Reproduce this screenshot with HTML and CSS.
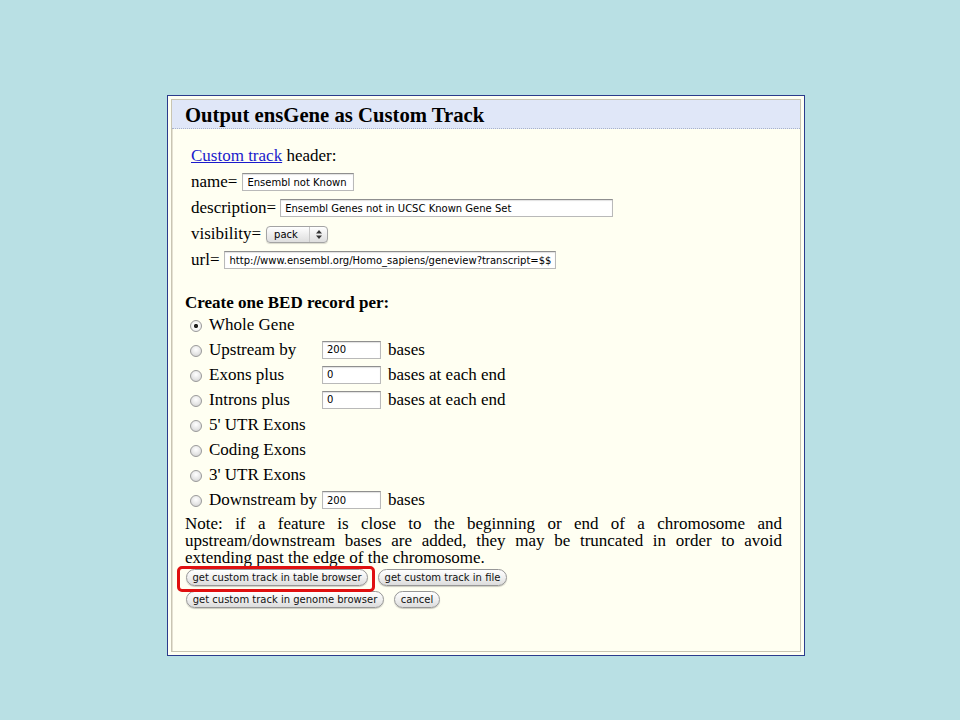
FILE: index.html
```html
<!DOCTYPE html>
<html>
<head>
<meta charset="utf-8">
<link rel="stylesheet" href="styles.css">
</head>
<body>
<div class="panel">
  <div class="inner">
    <div class="head"><h1>Output ensGene as Custom Track</h1></div>
    <div class="track">
      <div class="row"><a href="#" class="link">Custom track</a>&nbsp;header:</div>
      <div class="row">name=<span class="field w-name">Ensembl not Known</span></div>
      <div class="row">description=<span class="field w-desc">Ensembl Genes not in UCSC Known Gene Set</span></div>
      <div class="row">visibility=<span class="select"><span class="sel-text">pack</span><span class="sel-arrows"><svg width="6" height="9" viewBox="0 0 6 9"><path d="M3 0L6 3.5H0Z M3 9L6 5.5H0Z" fill="#333"/></svg></span></span></div>
      <div class="row">url=<span class="field w-url">http://www.ensembl.org/Homo_sapiens/geneview?transcript=$$</span></div>
    </div>
    <div class="bed">
      <div class="bed-title">Create one BED record per:</div>
      <div class="radios">
        <div class="rrow"><span class="radio checked"></span><span class="rlabel">Whole Gene</span></div>
        <div class="rrow"><span class="radio"></span><span class="rlabel fixed">Upstream by</span><span class="field w-num">200</span><span class="after">bases</span></div>
        <div class="rrow"><span class="radio"></span><span class="rlabel fixed">Exons plus</span><span class="field w-num">0</span><span class="after">bases at each end</span></div>
        <div class="rrow"><span class="radio"></span><span class="rlabel fixed">Introns plus</span><span class="field w-num">0</span><span class="after">bases at each end</span></div>
        <div class="rrow"><span class="radio"></span><span class="rlabel">5' UTR Exons</span></div>
        <div class="rrow"><span class="radio"></span><span class="rlabel">Coding Exons</span></div>
        <div class="rrow"><span class="radio"></span><span class="rlabel">3' UTR Exons</span></div>
        <div class="rrow"><span class="radio"></span><span class="rlabel fixed">Downstream by</span><span class="field w-num">200</span><span class="after">bases</span></div>
      </div>
      <p class="note">Note: if a feature is close to the beginning or end of a chromosome and upstream/downstream bases are added, they may be truncated in order to avoid extending past the edge of the chromosome.</p>
      <div class="btnrow">
        <span class="hl"><button class="btn b1">get custom track in table browser</button></span>
        <button class="btn b2">get custom track in file</button>
      </div>
      <div class="btnrow">
        <button class="btn b3">get custom track in genome browser</button>
        <button class="btn b4">cancel</button>
      </div>
    </div>
  </div>
</div>
</body>
</html>
```
FILE: styles.css
```css
html, body {
  margin: 0;
  padding: 0;
}
body {
  width: 960px;
  height: 720px;
  background: #b9e0e4;
  font-family: "Liberation Serif", "Times New Roman", serif;
  font-size: 17px;
  color: #000;
  padding-top: 95px;
  box-sizing: border-box;
  overflow: hidden;
}
.panel {
  margin-left: 167px;
  width: 638px;
  height: 561px;
  box-sizing: border-box;
  border: 1px solid #2b3b8c;
  background: #fffff2;
  padding: 3px;
}
.inner {
  height: 100%;
  box-sizing: border-box;
  border: 1px solid #c9c5b3;
  box-shadow: inset 1px 1px 0 #e4e1d2;
}
.head {
  background: #e0e7f8;
  height: 28px;
  border-bottom: 1px dotted #a8b2cc;
  display: flex;
  align-items: center;
  padding-left: 13px;
}
.head h1 {
  margin: 0;
  font-size: 20.7px;
  font-weight: bold;
  line-height: 1;
  position: relative;
  top: 1px;
}
.track {
  padding: 14px 0 0 19px;
}
.row {
  height: 26px;
  display: flex;
  align-items: center;
  white-space: pre;
}
.link {
  color: #1a1acc;
  text-decoration: underline;
}
.field {
  display: inline-flex;
  align-items: center;
  box-sizing: border-box;
  height: 18px;
  border: 1px solid #b9b9b9;
  border-top-color: #8f8f8f;
  background: #fff;
  box-shadow: inset 0 1px 1px rgba(0,0,0,0.12);
  font-family: "DejaVu Sans", Verdana, sans-serif;
  font-size: 10px;
  padding-left: 4px;
  margin-left: 3px;
  overflow: hidden;
  white-space: nowrap;
}
.w-name { width: 112px; margin-left: 5px; }
.w-desc { width: 333px; margin-left: 4px; }
.w-url { width: 332px; margin-left: 5px; }
.w-num { width: 59px; margin-left: 0; }
.select {
  display: inline-flex;
  align-items: center;
  box-sizing: border-box;
  width: 62px;
  height: 17px;
  margin-left: 5px;
  border: 1px solid #a4a4a4;
  border-radius: 4px;
  background: linear-gradient(#ffffff, #ececec 55%, #dedede);
  font-family: "DejaVu Sans", Verdana, sans-serif;
  font-size: 10px;
  box-shadow: 0 1px 1px rgba(0,0,0,0.15);
}
.sel-text {
  flex: 1;
  padding-left: 7px;
}
.sel-arrows {
  width: 17px;
  height: 100%;
  display: flex;
  align-items: center;
  justify-content: center;
  border-left: 1px solid #c8c8c8;
}
.bed {
  padding: 20px 18px 0 13px;
}
.bed-title {
  font-weight: bold;
  height: 20px;
  line-height: 20px;
}
.radios {
  margin-left: 5px;
  margin-top: -1px;
}
.rrow {
  height: 25.1px;
  display: flex;
  align-items: center;
}
.radio {
  width: 12px;
  height: 12px;
  box-sizing: border-box;
  border-radius: 50%;
  border: 1px solid #9a9a9a;
  background: radial-gradient(circle at 50% 35%, #ffffff 0%, #e6e6e6 55%, #c9c9c9 100%);
  margin-right: 7px;
  position: relative;
  top: 1px;
  display: inline-block;
}
.radio.checked {
  background: radial-gradient(circle, #222 0, #222 1.8px, #fafafa 2.4px, #e6e6e6 100%);
}
.rlabel.fixed {
  width: 113px;
}
.after {
  margin-left: 7px;
}
.note {
  margin: 2px 0 0 0;
  line-height: 17.3px;
  text-align: justify;
}
.btnrow {
  display: flex;
  gap: 10px;
  margin-top: 2px;
  margin-left: 1px;
}
.btnrow + .btnrow {
  margin-top: 5px;
}
.hl {
  position: relative;
  display: inline-flex;
}
.hl::after {
  content: "";
  position: absolute;
  left: -9px;
  right: -7px;
  top: -3px;
  bottom: -6px;
  border: 3px solid #e01010;
  border-radius: 5px;
}
.btn {
  height: 17px;
  box-sizing: border-box;
  border: 1px solid #979797;
  border-radius: 9px;
  background: linear-gradient(#ffffff, #f0f0f0 50%, #dcdcdc);
  font-family: "DejaVu Sans", Verdana, sans-serif;
  font-size: 10px;
  color: #111;
  padding: 0 4px;
  line-height: 15px;
  box-shadow: 0 1px 1px rgba(0,0,0,0.2);
  margin: 0;
  white-space: nowrap;
}
.b1 { width: 182px; }
.b2 { width: 129px; }
.b3 { width: 198px; }
.b4 { width: 46px; }
```
